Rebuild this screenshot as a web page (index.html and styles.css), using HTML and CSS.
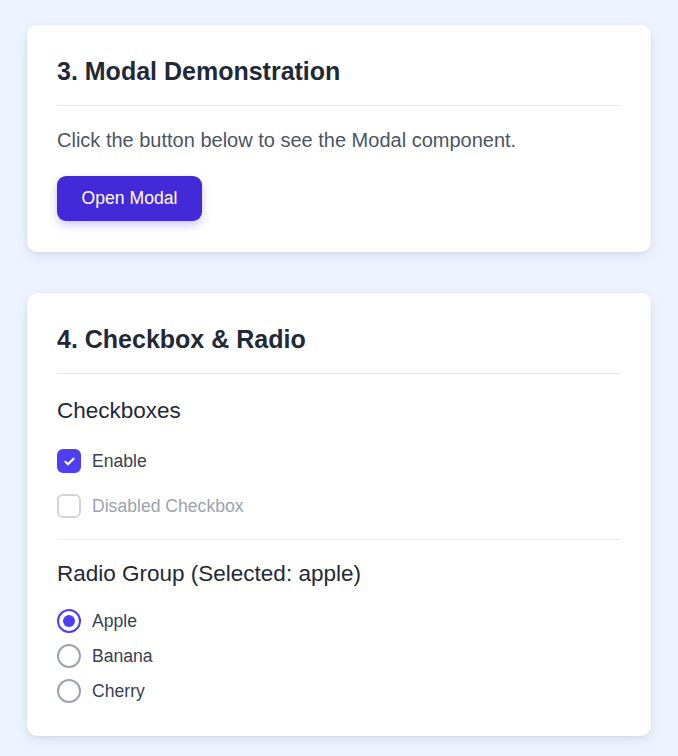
FILE: index.html
```html
<!DOCTYPE html>
<html lang="en">
<head>
<meta charset="utf-8">
<title>Components</title>
<link rel="stylesheet" href="styles.css">
</head>
<body>
<main class="page">
  <section class="card card-prev"></section>

  <section class="card">
    <h2 class="card-title">3. Modal Demonstration</h2>
    <p class="card-text">Click the button below to see the Modal component.</p>
    <button class="btn-primary" type="button">Open Modal</button>
  </section>

  <section class="card">
    <h2 class="card-title">4. Checkbox &amp; Radio</h2>
    <h3 class="sub-title sub-first">Checkboxes</h3>
    <div class="check-list">
      <label class="check-row">
        <span class="check-box checked">
          <svg viewBox="0 0 24 24" width="15" height="15" fill="none" stroke="#fff" stroke-width="3.4" stroke-linecap="round" stroke-linejoin="round"><path d="M5.5 12.5l4 4L18.5 7.5"/></svg>
        </span>
        <span class="check-label">Enable</span>
      </label>
      <label class="check-row disabled">
        <span class="check-box"></span>
        <span class="check-label">Disabled Checkbox</span>
      </label>
    </div>
    <hr class="divider">
    <h3 class="sub-title">Radio Group (Selected: apple)</h3>
    <div class="radio-list">
      <label class="radio-row">
        <span class="radio checked"></span>
        <span class="check-label">Apple</span>
      </label>
      <label class="radio-row">
        <span class="radio"></span>
        <span class="check-label">Banana</span>
      </label>
      <label class="radio-row">
        <span class="radio"></span>
        <span class="check-label">Cherry</span>
      </label>
    </div>
  </section>
</main>
</body>
</html>
```

FILE: styles.css
```css
* { box-sizing: border-box; }

html, body {
  margin: 0;
  padding: 0;
  background: #eef4ff;
  height: 100%;
  overflow: hidden;
}

body {
  font-family: "Liberation Sans", Arial, sans-serif;
  color: #1f2937;
}

.page {
  width: 624px;
  margin: 0 auto;
  padding-top: 23px;
  display: flex;
  flex-direction: column;
  gap: 41px;
}

.card {
  background: #ffffff;
  border-radius: 10px;
  padding: 31px 30px 31px;
  box-shadow: 0 4px 14px rgba(30, 41, 80, 0.10), 0 1px 3px rgba(30, 41, 80, 0.06);
}

.card-prev {
  height: 60px;
  margin-top: -101px;
  flex: none;
}

.card-title {
  margin: 0;
  font-size: 25px;
  line-height: 30px;
  font-weight: 700;
  color: #1f2937;
  padding-bottom: 19px;
  border-bottom: 1px solid #e5e7eb;
}

.card-text {
  margin: 21px 0 22px;
  font-size: 20px;
  line-height: 27px;
  color: #4b5563;
}

.btn-primary {
  display: block;
  width: 145px;
  height: 45px;
  border: none;
  border-radius: 9px;
  background: #4429d8;
  color: #ffffff;
  font-family: "Liberation Sans", Arial, sans-serif;
  font-size: 17.6px;
  box-shadow: 0 4px 10px rgba(68, 41, 216, 0.25);
  padding: 0;
}

.card-checks {
  padding-bottom: 33px;
}

.sub-title {
  margin: 20px 0 0;
  font-size: 22.5px;
  line-height: 27px;
  font-weight: 400;
  color: #1f2937;
}

.sub-first {
  margin-top: 23px;
}

.check-list {
  margin-top: 25px;
  display: flex;
  flex-direction: column;
  gap: 21px;
}

.check-row, .radio-row {
  display: flex;
  align-items: center;
  gap: 11px;
  height: 24px;
}

.check-box {
  width: 24px;
  height: 24px;
  border-radius: 6px;
  border: 2px solid #d1d5db;
  background: #fff;
  display: flex;
  align-items: center;
  justify-content: center;
}

.check-box.checked {
  background: #4f3ff0;
  border-color: #4f3ff0;
}

.check-label {
  font-size: 17.6px;
  color: #374151;
}

.disabled .check-label {
  color: #9ca3af;
}

.divider {
  margin: 21px 0 0;
  border: none;
  border-top: 1px solid #eceef2;
}

.radio-list {
  margin-top: 22px;
  padding-bottom: 2px;
  display: flex;
  flex-direction: column;
  gap: 11px;
}

.radio {
  width: 24px;
  height: 24px;
  border-radius: 50%;
  border: 2px solid #9ca3af;
  background: #fff;
  display: flex;
  align-items: center;
  justify-content: center;
}

.radio.checked {
  border-color: #4f3ff0;
}

.radio.checked::after {
  content: "";
  width: 12px;
  height: 12px;
  border-radius: 50%;
  background: #4f3ff0;
}
```
